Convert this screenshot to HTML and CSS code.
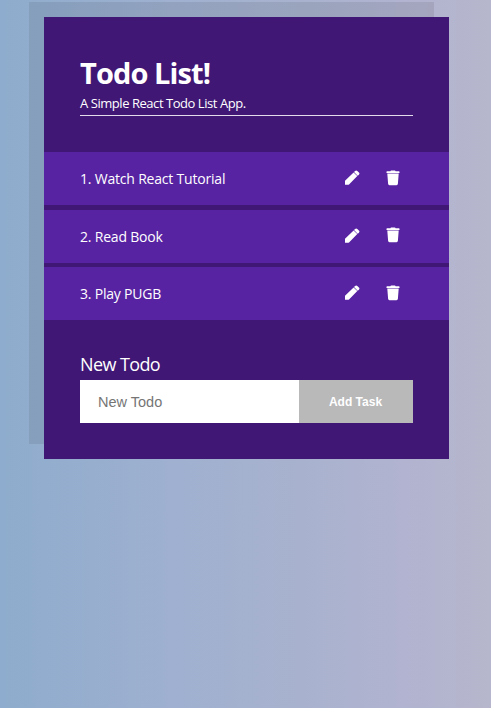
FILE: index.html
```html
<!DOCTYPE html>
<html lang="en">
<head>
<meta charset="utf-8">
<title>Todo List</title>
<link rel="stylesheet" href="styles.css">
</head>
<body>
<svg class="sprite" aria-hidden="true">
  <symbol id="pencil" viewBox="0 0 15 15"><path d="M0 14.800V10.800L8.600 2.400l3.700 3.700L4 14.400q-.4.400-1 .4zM9 2l1.100-1.100q1.100-1 2.200 0l1.600 1.600q1.100 1.100 0 2.200L12.700 5.700z"/></symbol>
  <symbol id="trash" viewBox="0 0 14 16"><path d="M.5 1.800Q.5 1.200 1.100 1.200H4.300L5 .4h4l.7.800h3.200q.6 0 .6.600V3H.5zM1.300 3.600h11.400l-.8 10.200Q11.800 15.200 10.500 15.200h-7Q2.200 15.200 2.100 13.800z"/></symbol>
</svg>
<main class="todo">
  <header class="todo-header">
    <h1 class="title">Todo List!</h1>
    <p class="subtitle">A Simple React Todo List App.</p>
  </header>
  <ul class="list">
    <li class="item"><span class="label">1. Watch React Tutorial</span><svg class="pencil"><use href="#pencil"/></svg><svg class="trash"><use href="#trash"/></svg></li>
    <li class="item"><span class="label">2. Read Book</span><svg class="pencil"><use href="#pencil"/></svg><svg class="trash"><use href="#trash"/></svg></li>
    <li class="item"><span class="label">3. Play PUGB</span><svg class="pencil"><use href="#pencil"/></svg><svg class="trash"><use href="#trash"/></svg></li>
  </ul>
  <form class="new-todo">
    <label class="new-label" for="task">New Todo</label>
    <div class="controls">
      <input class="field" id="task" type="text" placeholder="New Todo">
      <button class="add" type="button">Add Task</button>
    </div>
  </form>
</main>
</body>
</html>
```
FILE: styles.css
```css
* { box-sizing: border-box; }
body {
  margin: 0;
  min-height: 100vh;
  padding-top: 17px;
  background: linear-gradient(90deg, #8eaccd 0%, #9fb0d0 35%, #a8b2ce 62%, #b1b3d0 82%, #b6b6cc 100%);
  font-family: "Segoe UI", "Open Sans", "Noto Sans", sans-serif;
}
.sprite { display: none; }
.todo {
  width: 405px;
  height: 442px;
  margin-left: 44px;
  background: #401775;
  color: #fff;
  box-shadow: -15px -15px 0 rgba(0, 0, 0, .08);
}
.todo-header {
  height: 99px;
  margin: 0 36px;
  padding-top: 36px;
  border-bottom: 1px solid #e3dcec;
}
.title {
  margin: 0;
  font-size: 29px;
  line-height: 40px;
  letter-spacing: -.9px;
}
.subtitle {
  margin: 0;
  font-size: 13px;
  line-height: 21px;
  letter-spacing: -.45px;
}
.list {
  display: grid;
  gap: 4.5px;
  margin: 36px 0 0;
  padding: 0;
  list-style: none;
}
.item {
  display: flex;
  align-items: center;
  height: 53px;
  padding: 0 49px 0 36px;
  background: #5723a2;
  font-size: 14px;
  letter-spacing: -.2px;
}
.label { flex: 1; }
.pencil { width: 15px; height: 15px; margin-right: 26px; fill: #fff; }
.trash { width: 14px; height: 16px; fill: #fff; }
.pencil, .trash { margin-bottom: 2px; }
.new-todo { padding: 30px 36px 0; }
.new-label {
  display: block;
  height: 30px;
  font-size: 18px;
  line-height: 28px;
  letter-spacing: -.6px;
}
.controls { display: flex; height: 43px; }
.field {
  width: 219px;
  border: 0;
  padding: 0 18px;
  background: #fff;
  font: 14.5px "Liberation Sans", sans-serif;
}
.field::placeholder { color: #757575; }
.add {
  flex: 1;
  border: 0;
  padding: 0 1px 0 0;
  background: #b9b9b9;
  color: #fff;
  font: bold 12px "Liberation Sans", sans-serif;
}
```
